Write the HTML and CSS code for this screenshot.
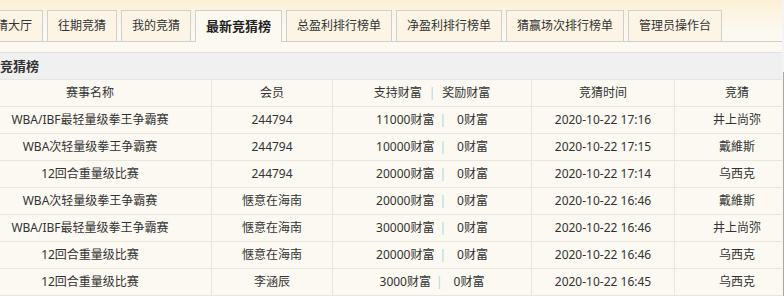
FILE: index.html
```html
<!DOCTYPE html>
<html>
	<head>
		<link rel="stylesheet" href="styles.css">
	</head>
	<body>

		<div class="frame">
			<div class="viewport">
				<div class="page">

					<div class="topArea">
						<div class="tabs">
							<div class="tab">竞猜大厅</div>
							<div class="tab">往期竞猜</div>
							<div class="tab">我的竞猜</div>
							<div class="tab active">最新竞猜榜</div>
							<div class="tab">总盈利排行榜单</div>
							<div class="tab">净盈利排行榜单</div>
							<div class="tab">猜赢场次排行榜单</div>
							<div class="tab">管理员操作台</div>
						</div>
					</div>

					<div class="titleBar">最新竞猜榜</div>

					<table class="listaTabla">
						<tr>
							<td class="colNombre">赛事名称</td>
							<td class="colMiembro">会员</td>
							<td class="colRiqueza">支持财富<span class="sepHead">|</span>奖励财富</td>
							<td class="colTiempo">竞猜时间</td>
							<td class="colGuess">竞猜</td>
						</tr>
						<tr>
							<td>WBA/IBF最轻量级拳王争霸赛</td>
							<td>244794</td>
							<td>11000财富<span class="sep">|</span>0财富</td>
							<td>2020-10-22 17:16</td>
							<td>井上尚弥</td>
						</tr>
						<tr>
							<td>WBA次轻量级拳王争霸赛</td>
							<td>244794</td>
							<td>10000财富<span class="sep">|</span>0财富</td>
							<td>2020-10-22 17:15</td>
							<td>戴維斯</td>
						</tr>
						<tr>
							<td>12回合重量级比赛</td>
							<td>244794</td>
							<td>20000财富<span class="sep">|</span>0财富</td>
							<td>2020-10-22 17:14</td>
							<td>乌西克</td>
						</tr>
						<tr>
							<td>WBA次轻量级拳王争霸赛</td>
							<td>惬意在海南</td>
							<td>20000财富<span class="sep">|</span>0财富</td>
							<td>2020-10-22 16:46</td>
							<td>戴維斯</td>
						</tr>
						<tr>
							<td>WBA/IBF最轻量级拳王争霸赛</td>
							<td>惬意在海南</td>
							<td>30000财富<span class="sep">|</span>0财富</td>
							<td>2020-10-22 16:46</td>
							<td>井上尚弥</td>
						</tr>
						<tr>
							<td>12回合重量级比赛</td>
							<td>惬意在海南</td>
							<td>20000财富<span class="sep">|</span>0财富</td>
							<td>2020-10-22 16:46</td>
							<td>乌西克</td>
						</tr>
						<tr>
							<td>12回合重量级比赛</td>
							<td>李涵辰</td>
							<td>3000财富<span class="sep">|</span>0财富</td>
							<td>2020-10-22 16:45</td>
							<td>乌西克</td>
						</tr>
					</table>

				</div>
			</div>

			<div class="scroll">
				<div class="thumb"></div>
			</div>
		</div>

	</body>
</html>
```

FILE: styles.css
```css
body {
	margin: 0;
	font-family: "Noto Sans", "Noto Sans CJK SC", sans-serif;
	font-size: 12px;
	color: #333;
	background: #f1f1f1;
}

.frame {
	display: flex;
	width: 784px;
	height: 296px;
	overflow: hidden;
}

.viewport {
	width: 782px;
	overflow: hidden;
}

.page {
	width: 829px;
	margin-left: -32px;
}

.topArea {
	background: linear-gradient(#fcf0d6, #fcf9f1 30px);
	padding-bottom: 10px;
	border-bottom: 1px solid #e4e2dc;
}

.tabs {
	display: flex;
	padding-top: 10px;
	padding-left: 5px;
	border-bottom: 1px solid #cfcfcf;
}

.tab {
	height: 30px;
	line-height: 30px;
	padding: 0 10px;
	border: 1px solid #cfcfcf;
	border-bottom: none;
	margin-right: 4px;
	background: #fcf5e5;
	white-space: nowrap;
}

.tab.active {
	height: 31px;
	margin-bottom: -1px;
	background: #fcf9f1;
	font-weight: bold;
	font-size: 13px;
	color: #222;
}

.titleBar {
	height: 26px;
	line-height: 26px;
	padding-left: 6px;
	font-size: 13px;
	font-weight: bold;
	color: #333;
	background: #f0f0f0;
}

.listaTabla {
	width: 829px;
	font-size: 12px;
	border-collapse: collapse;
	background: #fbf9f1;
	table-layout: fixed;
}

.listaTabla td {
	height: 26px;
	padding: 0;
	line-height: 16px;
	text-align: center;
	border: 1px solid #e8e5dc;
	white-space: nowrap;
}

.colNombre { width: 242px; }
.colMiembro { width: 120px; }
.colRiqueza { width: 198px; }
.colTiempo { width: 142px; }
.colGuess { width: 124px; }

.sep {
	color: #a9d6da;
	margin: 0 11px 0 5px;
}

.sepHead {
	color: #a9d6da;
	margin: 0 7px;
}

.scroll {
	width: 2px;
	background: #f4f4f4;
	display: flex;
	flex-direction: column;
}

.thumb {
	margin-top: 72px;
	flex: 1;
	border-right: 1px solid #a8a8a8;
}
```
